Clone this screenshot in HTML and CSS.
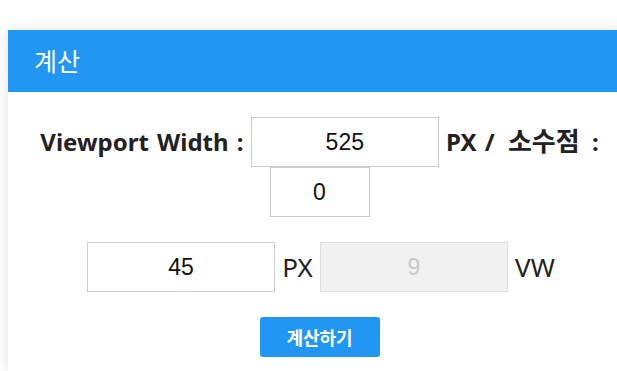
FILE: index.html
```html
<!DOCTYPE html>
<html>
<head>
  <title>계산</title>
  <link rel="stylesheet" href="styles.css">
</head>
<body>
  <div class="card">
    <!-- Card header -->
    <div class="card-header">계산</div>

    <div class="card-body">
      <!-- Viewport settings -->
      <div class="viewport-row">
        <label class="label" for="viewportWidth">Viewport Width :</label>
        <input type="text" id="viewportWidth" class="field" value="525">
        <label class="label" for="decimal">PX / <span class="label-ko">소수점</span> :</label>
        <input type="text" id="decimal" class="field field-small" value="0">
      </div>

      <!-- Conversion row -->
      <div class="convert-row">
        <input type="text" id="pxValue" class="field" value="45">
        <span class="unit">PX</span>
        <input type="text" id="vwValue" class="field" value="9" disabled>
        <span class="unit">VW</span>
      </div>

      <button class="calc-button" id="calcButton">계산하기</button>
    </div>
  </div>
</body>
</html>
```

FILE: styles.css
```css
/* Page */
body {
  margin: 0;
  background-color: #fff;
  font-family: "Noto Sans", "Noto Sans CJK KR", sans-serif;
  overflow: hidden;
}
/* Card */
.card {
  width: 623px;
  margin: 30px 0 0 8px;
  background-color: #fff;
  box-shadow: 0 0 12px rgba(0, 0, 0, 0.12);
}
.card-header {
  height: 62px;
  box-sizing: border-box;
  padding: 13px 0 0 26px;
  background-color: #2196f3;
  color: #fff;
  font-family: "Noto Sans CJK KR", sans-serif;
  font-size: 25px;
  line-height: 34px;
}
.card-body {
  padding: 25px 0 14px;
  text-align: center;
}
/* Rows */
.viewport-row {
  line-height: 50px;
}
.label {
  font-size: 24px;
  font-weight: bold;
  color: #222;
  word-spacing: 2px;
  vertical-align: top;
}
.label-ko {
  font-size: 26px;
  line-height: 1;
  padding: 0 4px 0 5px;
}
.field {
  width: 188px;
  height: 50px;
  box-sizing: border-box;
  border: 1px solid #ccc;
  margin: 0 3px;
  padding: 0;
  font-family: "Liberation Sans", Arial, sans-serif;
  font-size: 23px;
  color: #111;
  text-align: center;
  vertical-align: top;
}
.field-small {
  width: 100px;
}
.field:disabled {
  background-color: #f1f1f1;
  border-color: #ddd;
  color: #c8c8c8;
}
.convert-row {
  margin-top: 25px;
  line-height: 50px;
}
.unit {
  font-size: 26px;
  color: #222;
  vertical-align: top;
}
/* Button */
.calc-button {
  margin-top: 25px;
  width: 120px;
  height: 40px;
  border: none;
  border-radius: 3px;
  background-color: #2196f3;
  color: #fff;
  font-family: "Noto Sans CJK KR", sans-serif;
  font-size: 18px;
  font-weight: bold;
  cursor: pointer;
}
```
